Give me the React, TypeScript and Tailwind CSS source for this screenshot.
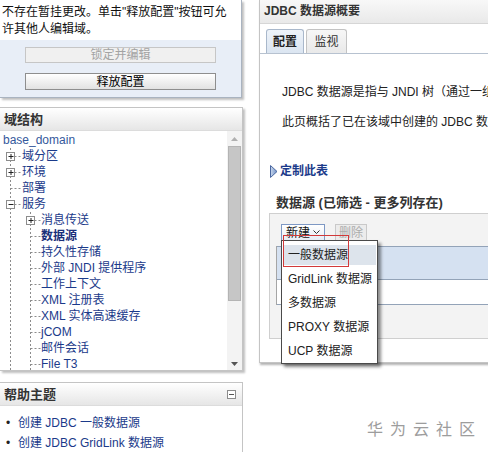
import React from "react"

type TreeNode = { label: string; level: number; toggle?: "plus" | "minus"; bold?: boolean }

const treeNodes: TreeNode[] = [
    { label: "域分区", level: 1, toggle: "plus" },
    { label: "环境", level: 1, toggle: "plus" },
    { label: "部署", level: 1 },
    { label: "服务", level: 1, toggle: "minus" },
    { label: "消息传送", level: 2, toggle: "plus" },
    { label: "数据源", level: 2, bold: true },
    { label: "持久性存储", level: 2 },
    { label: "外部 JNDI 提供程序", level: 2 },
    { label: "工作上下文", level: 2 },
    { label: "XML 注册表", level: 2 },
    { label: "XML 实体高速缓存", level: 2 },
    { label: "jCOM", level: 2 },
    { label: "邮件会话", level: 2 },
    { label: "File T3", level: 2 },
]

const menuItems = ["一般数据源", "GridLink 数据源", "多数据源", "PROXY 数据源", "UCP 数据源"]

// dashed connectors + expander box in front of each tree node
function TreeGuide({ level, toggle }: { level: number; toggle?: "plus" | "minus" }) {
    const w = level === 1 ? 22 : 41
    const x = level === 1 ? 10.5 : 30.5
    return (
        <svg width={w} height={16} className="shrink-0">
            <g stroke="#8c8c8c" strokeDasharray="2 2" strokeWidth={1}>
                <line x1={10.5} y1={0} x2={10.5} y2={16} />
                {level === 2 && <line x1={30.5} y1={0} x2={30.5} y2={16} />}
                <line x1={x} y1={8.5} x2={w} y2={8.5} />
            </g>
            {toggle && (
                <g>
                    <rect x={x - 4} y={4.5} width={8} height={8} fill="#fff" stroke="#8c8c8c" />
                    <line x1={x - 2} y1={8.5} x2={x + 3} y2={8.5} stroke="#222" />
                    {toggle === "plus" && <line x1={x + 0.5} y1={6} x2={x + 0.5} y2={11} stroke="#222" />}
                </g>
            )}
        </svg>
    )
}

function PanelHeader({ title, minus }: { title: string; minus?: boolean }) {
    return (
        <div className="flex h-[23px] items-center justify-between border-b border-[#dcdcdc] bg-gradient-to-b from-[#ffffff] to-[#e6e6e6] pl-[4px] pr-[6px]">
            <span className="text-[13px] font-bold leading-none text-[#333]">{title}</span>
            {minus && (
                <span className="flex h-[9px] w-[9px] items-center justify-center border border-[#8c8c8c] bg-white">
                    <span className="h-px w-[5px] bg-[#555]" />
                </span>
            )}
        </div>
    )
}

export default function App() {
    return (
        <div
            className="relative flex h-[452px] w-[488px] overflow-hidden bg-white text-[12px] text-[#111]"
            style={{ fontFamily: '"Liberation Sans", "Noto Sans CJK SC", sans-serif' }}
        >
            {/* ---------- left column ---------- */}
            <div className="flex w-[245px] shrink-0 flex-col">
                {/* change center */}
                <div className="h-[98px] w-[242px] shrink-0 border-r border-b border-[#a9b3c0] bg-[#e8eef7] shadow-[2px_2px_2px_rgba(0,0,0,0.25)]">
                    <div className="h-[40px] bg-white pl-[2px] pt-[4px] leading-[17px]">
                        不存在暂挂更改。单击"释放配置"按钮可允
                        <br />
                        许其他人编辑域。
                    </div>
                    <div className="mx-[25px] mt-[7px] flex h-[16px] items-center justify-center border border-[#c6c6c6] bg-[#f0f0f0] text-[#a3a3a3]">
                        锁定并编辑
                    </div>
                    <div className="mx-[25px] mt-[10px] flex h-[17px] items-center justify-center border border-[#8e8e8e] bg-gradient-to-b from-[#ffffff] to-[#e2e2e2] text-black">
                        释放配置
                    </div>
                </div>

                {/* domain structure */}
                <div className="mt-[9px] h-[264px] w-[243px] shrink-0 overflow-hidden border border-l-0 border-[#c4c4c4] bg-white shadow-[2px_2px_2px_rgba(0,0,0,0.25)]">
                    <PanelHeader title="域结构" />
                    <div className="flex h-[240px]">
                        <div className="flex-1 overflow-hidden pt-[1px] text-[#1b3a8a]">
                            <div className="flex h-4 items-center pl-[3px] text-[#34589c]">base_domain</div>
                            {treeNodes.map((n) => (
                                <div key={n.label} className="flex h-4 items-center whitespace-nowrap">
                                    <TreeGuide level={n.level} toggle={n.toggle} />
                                    <span className={n.bold ? "font-bold text-[#1a2f7a]" : ""}>{n.label}</span>
                                </div>
                            ))}
                        </div>
                        {/* scrollbar */}
                        <div className="flex w-[15px] flex-col bg-[#f3f3f3]">
                            <div className="flex h-[15px] items-center justify-center">
                                <svg width="7" height="4"><polygon points="0,4 3.5,0 7,4" fill="#b0b0b0" /></svg>
                            </div>
                            <div className="mx-[1px] h-[155px] border border-[#b4b4b4] bg-[#c6c6c6]" />
                            <div className="flex-1" />
                            <div className="flex h-[15px] items-center justify-center">
                                <svg width="7" height="4"><polygon points="0,0 7,0 3.5,4" fill="#555" /></svg>
                            </div>
                        </div>
                    </div>
                </div>

                {/* help topics */}
                <div className="mt-[11px] h-[80px] w-[243px] shrink-0 border border-l-0 border-[#c4c4c4] bg-white">
                    <PanelHeader title="帮助主题" minus />
                    <ul className="pt-[7px] text-[#1b3a8a]">
                        <li className="flex h-[20px] items-center">
                            <span className="w-[18px] pl-[6px] text-[#222]">•</span>创建 JDBC 一般数据源
                        </li>
                        <li className="flex h-[20px] items-center">
                            <span className="w-[18px] pl-[6px] text-[#222]">•</span>创建 JDBC GridLink 数据源
                        </li>
                    </ul>
                </div>
            </div>

            {/* ---------- right column ---------- */}
            <div className="ml-[14px] min-w-0 flex-1">
                <div className="h-[363px] w-[300px] border-l border-b border-[#c4c4c4] bg-white shadow-[1px_2px_2px_rgba(0,0,0,0.3)]">
                    <div className="h-[24px] border-b border-[#d6d6d6] bg-gradient-to-b from-[#f8f8f8] to-[#e9e9e9] pl-[4px] text-[12px] font-bold leading-[23px] text-[#333]">
                        JDBC 数据源概要
                    </div>
                    <div className="flex gap-[2px] border-b border-[#b7c2d0] pl-[6px] pt-[5px]">
                        <div className="flex h-[24px] w-[38px] items-center justify-center rounded-t-[3px] border border-b-0 border-[#a9b8cb] bg-gradient-to-b from-[#eef3f9] to-[#dbe5f1] font-bold text-[#222]">
                            配置
                        </div>
                        <div className="flex h-[24px] w-[41px] items-center justify-center rounded-t-[3px] border border-b-0 border-[#c3c3c3] bg-gradient-to-b from-[#f7f7f7] to-[#e9e9e9] text-[#333]">
                            监视
                        </div>
                    </div>

                    <div className="mt-[30px] whitespace-nowrap pl-[22px] leading-4 text-[#222]">
                        JDBC 数据源是指与 JNDI 树（通过一组 JDBC 连接）绑定的对象。
                    </div>
                    <div className="mt-[14px] whitespace-nowrap pl-[22px] leading-4 text-[#222]">
                        此页概括了已在该域中创建的 JDBC 数据源。
                    </div>

                    <div className="mt-[33px] flex h-4 items-center pl-[10px] font-bold text-[#1b3a8a]">
                        <svg width="8" height="13" className="mr-[2px]">
                            <defs>
                                <linearGradient id="tri" x1="0" y1="0" x2="1" y2="0">
                                    <stop offset="0" stopColor="#c9d8ee" />
                                    <stop offset="1" stopColor="#6f8fc4" />
                                </linearGradient>
                            </defs>
                            <polygon points="0.5,0.5 7,6.5 0.5,12.5" fill="url(#tri)" stroke="#4a67a0" />
                        </svg>
                        定制此表
                    </div>

                    <div className="mt-[16px] h-4 pl-[16px] text-[13px] font-bold leading-4 text-[#333]">
                        数据源 (已筛选 - 更多列存在)
                    </div>

                    {/* table area */}
                    <div className="ml-[9px] mt-[2px] h-[126px] border border-r-0 border-[#cfcfcf] bg-[#f3f3f3]">
                        <div className="flex gap-[10px] pl-[11px] pt-[10px]">
                            <div className="relative">
                                <div className="flex h-[17px] w-[44px] items-center justify-center gap-[3px] border border-[#7d98c4] bg-gradient-to-b from-[#ffffff] to-[#e7edf6] text-[#111]">
                                    新建
                                    <svg width="7" height="5"><polyline points="0.5,0.5 3.5,3.5 6.5,0.5" fill="none" stroke="#333" /></svg>
                                </div>
                                {/* dropdown menu */}
                                <div className="absolute left-0 top-[16px] z-10 w-[97px] border border-[#4a4a4a] bg-white pt-[2px] shadow-[3px_3px_3px_rgba(0,0,0,0.45)]">
                                    {menuItems.map((m, i) => (
                                        <div key={m} className="flex h-[24px] items-center px-[1px]">
                                            <div className={`flex h-[20px] w-full items-center whitespace-nowrap pl-[5px] text-[#222] ${i === 0 ? "bg-[#dde4ec]" : ""}`}>
                                                {m}
                                            </div>
                                        </div>
                                    ))}
                                </div>
                                {/* highlight frame */}
                                <div className="absolute left-[2px] top-[11px] z-20 h-[32px] w-[66px] border border-[#d23a3a]" />
                            </div>
                            <div className="flex h-[17px] w-[32px] items-center justify-center border border-[#c9c9c9] bg-[#ececec] text-[#ababab]">
                                删除
                            </div>
                        </div>
                        <div className="ml-[6px] mt-[5px] border-l border-[#a5a5a5]">
                            <div className="h-[34px] border-t border-b border-[#93a3b8] bg-[#d5e1f1]" />
                            <div className="h-[25px] border-b border-[#93a3b8] bg-white" />
                        </div>
                    </div>
                </div>
            </div>

            {/* watermark */}
            <div className="absolute left-[367px] top-[418px] text-[16px] tracking-[7px] text-[#9d9d9d]">华为云社区</div>
        </div>
    )
}
